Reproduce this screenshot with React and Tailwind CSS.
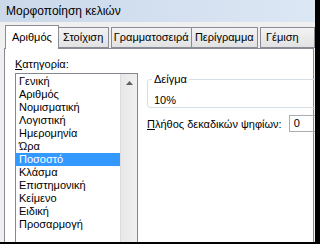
export default function App() {
  const items = ['Γενική', 'Αριθμός', 'Νομισματική', 'Λογιστική', 'Ημερομηνία', 'Ώρα', 'Ποσοστό', 'Κλάσμα', 'Επιστημονική', 'Κείμενο', 'Ειδική', 'Προσαρμογή'];

  return (
    <div className="w-[320px] h-[244px] overflow-hidden bg-black font-['Liberation_Sans'] text-[11px] text-black">
      <div className="w-[315px] h-[242px] flex flex-col overflow-hidden bg-[#f0f0f0]">
        <div className="h-[22px] shrink-0 flex items-center pl-[6px] text-[12px] bg-gradient-to-r from-[#cad8ea] to-[#dce7f4]">
          Μορφοποίηση κελιών
        </div>
        <div className="h-[26px] shrink-0 flex items-end pl-[5px] pt-[2px]">
          <div className="w-[59px] h-[24px] -mb-px z-10 flex items-center justify-center bg-white border border-b-0 border-[#898c95]">Αριθμός</div>
          <div className="w-[55px] h-[21px] flex items-center justify-center bg-gradient-to-b from-[#f3f3f3] to-[#e2e2e2] border border-l-0 border-[#898c95]">Στοίχιση</div>
          <div className="w-[89px] h-[21px] ml-[2px] flex items-center justify-center bg-gradient-to-b from-[#f3f3f3] to-[#e2e2e2] border border-[#898c95]">Γραμματοσειρά</div>
          <div className="w-[73px] h-[21px] flex items-center justify-center bg-gradient-to-b from-[#f3f3f3] to-[#e2e2e2] border border-l-0 border-[#898c95]">Περίγραμμα</div>
          <div className="w-[60px] h-[21px] ml-[2px] flex items-center pl-[5px] bg-gradient-to-b from-[#f3f3f3] to-[#e2e2e2] border border-[#898c95] whitespace-nowrap">Γέμιση</div>
        </div>
        <div className="flex-1 ml-[4px] mr-[1px] flex bg-white border-l border-t border-r border-[#898c95] pl-[10px] pt-[8px] min-h-0">
          <div className="w-[123px] shrink-0 flex flex-col">
            <div className="h-[16px] leading-[14px]"><span className="underline">Κ</span>ατηγορία:</div>
            <div className="flex-1 flex border border-b-0 border-[#828790] min-h-0">
              <div className="flex-1 pt-[1px]">
                {items.map((t) => (
                  <div key={t} className={'h-[13px] leading-[13px] pl-[3px] ' + (t === 'Ποσοστό' ? 'bg-[#3399ff] text-white' : '')}>{t}</div>
                ))}
              </div>
              <div className="w-[17px] bg-gradient-to-r from-[#e8e8e8] to-[#f0f0f0] border-l border-[#dcdcdc] flex justify-center pt-[7px]">
                <svg width="7" height="4" viewBox="0 0 7 4"><path d="M0 4 L3.5 0 L7 4 Z" fill="#606060" /></svg>
              </div>
            </div>
          </div>
          <div className="flex-1 ml-[9px] min-w-0">
            <div className="relative h-[29px] mt-[22px] border border-[#d5dfe5] rounded-[3px] mr-[-10px]">
              <div className="absolute -top-[8px] left-[4px] bg-white px-[2px] leading-[14px]">Δείγμα</div>
              <div className="pl-[6px] pt-[13px] leading-[14px]">10%</div>
            </div>
            <div className="flex items-center mt-[7px] h-[17px] whitespace-nowrap">
              <span className="leading-[14px]"><span className="underline">Π</span>λήθος δεκαδικών ψηφίων:</span>
              <div className="ml-[7px] w-[40px] h-[17px] border border-[#abadb3] pl-[4px] leading-[15px] shrink-0">0</div>
            </div>
          </div>
        </div>
      </div>
    </div>
  );
}
